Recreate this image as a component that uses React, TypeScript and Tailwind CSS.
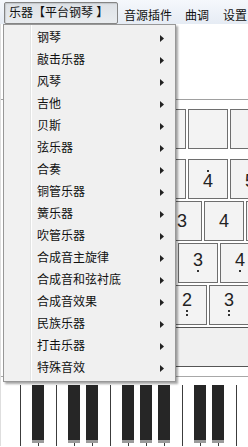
import React from 'react';

const instruments = [
  '钢琴',
  '敲击乐器',
  '风琴',
  '吉他',
  '贝斯',
  '弦乐器',
  '合奏',
  '铜管乐器',
  '簧乐器',
  '吹管乐器',
  '合成音主旋律',
  '合成音和弦衬底',
  '合成音效果',
  '民族乐器',
  '打击乐器',
  '特殊音效',
];

type Octave = 'high' | 'mid' | 'low' | 'lower' | 'none';

interface KeyRow {
  offset: string;
  octave: Octave;
  labels: string[];
}

// jianpu keyboard rows, staggered like a typing keyboard (keys under the open menu left blank)
const rows: KeyRow[] = [
  { offset: 'ml-[20px]', octave: 'high', labels: ['', '', '', '', '4', '5'] },
  { offset: 'ml-[36px]', octave: 'mid', labels: ['', '', '', '3', '4', ''] },
  { offset: 'ml-[10px]', octave: 'low', labels: ['', '', '', '', '3', '4'] },
  { offset: 'ml-[41px]', octave: 'lower', labels: ['', '', '', '2', '3'] },
];

const blackKeys = ['left-[32px]', 'left-[68px]', 'left-[86px]', 'left-[122px]', 'left-[140px]', 'left-[158px]', 'left-[194px]', 'left-[212px]'];

function Dot({ className = '' }: { className?: string }) {
  return <span className={`block h-[2px] w-[2px] bg-[#333] ${className}`} />;
}

function Note({ label, octave }: { label: string; octave: Octave }) {
  if (!label) return null;
  return (
    <div className="flex flex-col items-center">
      {octave === 'high' && <Dot className="mb-[3px]" />}
      <span className="block h-[13px] text-[18px] leading-[13px] text-[#222]">{label}</span>
      {(octave === 'low' || octave === 'lower') && <Dot className="mt-[3px]" />}
      {octave === 'lower' && <Dot className="mt-[2px]" />}
    </div>
  );
}

function NoteKey({ label, octave }: { label: string; octave: Octave }) {
  return (
    <div className="flex h-[40px] w-[40px] shrink-0 items-center justify-center border border-[#6e6e6e] bg-[#f3f3f3]">
      <Note label={label} octave={octave} />
    </div>
  );
}

function Arrow() {
  return (
    <svg width="4" height="7" viewBox="0 0 4 7" className="shrink-0">
      <polygon points="0,0 4,3.5 0,7" fill="#222" />
    </svg>
  );
}

function InstrumentMenu() {
  return (
    <div className="absolute left-[3px] top-[24px] z-10 flex h-[358px] w-[173px] border border-[#979797] bg-[#f0f0f0] shadow-[2px_2px_2px_rgba(0,0,0,0.35)]">
      <div className="w-[26px] bg-[#f1f1f1]" />
      <div className="w-[1px] bg-[#e2e3e3]" />
      <div className="w-[1px] bg-white" />
      <ul className="flex-1 py-[2px]">
        {instruments.map((name) => (
          <li key={name} className="flex h-[22px] items-center justify-between pl-[5px] pr-[11px] text-[12px] text-[#111]">
            <span>{name}</span>
            <Arrow />
          </li>
        ))}
      </ul>
    </div>
  );
}

export default function App() {
  return (
    <div
      className="relative h-[447px] w-[248px] overflow-hidden bg-white"
      style={{ fontFamily: '"Liberation Sans", "Noto Sans CJK SC", sans-serif' }}
    >
      {/* menu bar */}
      <div className="flex h-[24px] items-start whitespace-nowrap bg-gradient-to-b from-[#f5f8fc] to-[#e6ecf4] text-[12px] text-[#111]">
        <div className="ml-[4px] mt-[2px] flex h-[22px] w-[114px] shrink-0 items-center rounded-[2px] border border-[#858585] bg-gradient-to-b from-[#dde1e6] to-[#e9ecef] pl-[4px] shadow-[inset_1px_1px_1px_rgba(0,0,0,0.12)]">
          乐器【平台钢琴 】
        </div>
        <span className="ml-[6px] mt-[7px]">音源插件</span>
        <span className="ml-[13px] mt-[7px]">曲调</span>
        <span className="ml-[14px] mt-[7px]">设置</span>
      </div>

      {/* body */}
      <div className="flex flex-col border-l border-[#dedede]">
        <div className="h-[76px] border-b border-[#a0a0a0] bg-white" />

        <div className="mt-[9px] flex gap-[2px] ml-[19px]">
          {[0, 1, 2, 3, 4, 5].map((i) => (
            <NoteKey key={i} label="" octave="none" />
          ))}
        </div>

        <div className="mt-[10px] flex flex-col gap-[2px]">
          {rows.map((row, r) => (
            <div key={r} className={`flex gap-[2px] ${row.offset} -translate-x-[1px]`}>
              {row.labels.map((label, i) => (
                <NoteKey key={i} label={label} octave={row.octave} />
              ))}
            </div>
          ))}
          <div className="ml-[6px] h-[40px] w-[260px] shrink-0 border border-[#555] bg-[#f0f0f0]" />
        </div>

        <div className="mt-[9px] h-[1px] w-full bg-[#a8a8a8]" />

        {/* piano */}
        <div className="relative mt-[8px] flex h-[61px] pl-[19px]">
          {Array.from({ length: 13 }).map((_, i) => (
            <div key={i} className="h-full w-[18px] shrink-0 border-l border-[#3c3c3c] bg-white" />
          ))}
          {blackKeys.map((pos) => (
            <div key={pos} className={`absolute top-0 h-[58px] w-[12px] -translate-x-[1px] border-b-[3px] border-[#9a9a9a] bg-[#262626] ${pos}`} />
          ))}
        </div>
      </div>

      <InstrumentMenu />
    </div>
  );
}
